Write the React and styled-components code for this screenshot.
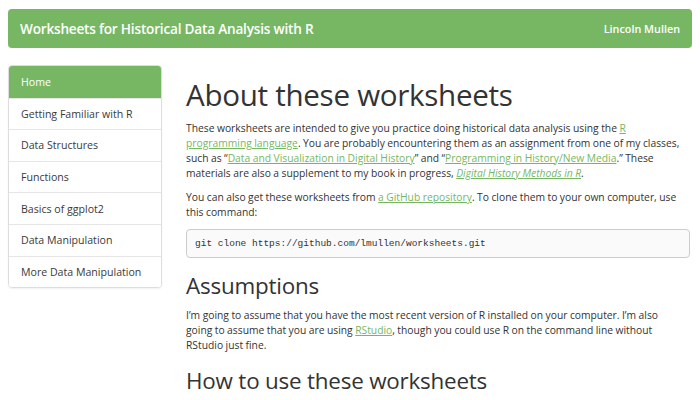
import styled, { createGlobalStyle } from 'styled-components'

const GlobalStyle = createGlobalStyle`
  html, body {
    margin: 0;
    padding: 0;
    background: #fff;
  }
  body {
    font-family: "Open Sans", "Noto Sans", sans-serif;
    color: #333;
    overflow: hidden;
  }
`

const Page = styled.div`
  width: 700px;
  height: 400px;
  padding: 9px 8px 0 8px;
  box-sizing: border-box;
  overflow: hidden;
`

const Navbar = styled.header`
  height: 39px;
  background: #77b764;
  border-radius: 4px;
  display: flex;
  align-items: center;
  justify-content: space-between;
  padding: 0 12px 0 12px;
  color: #fff;
`

const Brand = styled.div`
  font-size: 13.6px;
  font-weight: 600;
  letter-spacing: -0.2px;
`

const Author = styled.div`
  font-size: 10.8px;
  font-weight: 600;
`

const Body = styled.div`
  display: flex;
  gap: 24px;
  margin-top: 17px;
`

const Sidebar = styled.nav`
  width: 152px;
  flex-shrink: 0;
  align-self: flex-start;
  border: 1px solid #ddd;
  border-radius: 4px;
  overflow: hidden;
  box-shadow: 0 1px 2px rgba(0, 0, 0, 0.06);
`

const NavItem = styled.div`
  height: 31.6px;
  box-sizing: border-box;
  display: flex;
  align-items: center;
  padding-left: 12px;
  font-size: 10.6px;
  color: ${p => (p.active ? '#fff' : '#3a3a3a')};
  background: ${p => (p.active ? '#77b764' : '#fff')};
  border-top: ${p => (p.first ? 'none' : '1px solid #e6e6e6')};
`

const Content = styled.main`
  flex: 1;
  min-width: 0;
  padding-right: 2px;
`

const H1 = styled.h1`
  font-size: 29.6px;
  font-weight: 400;
  margin: 14px 0 9px 0;
  line-height: 1.1;
  letter-spacing: -0.3px;
  color: #333;
`

const H2 = styled.h2`
  font-size: 22.4px;
  font-weight: 400;
  margin: 16px 0 10px 0;
  line-height: 1.1;
  letter-spacing: -0.2px;
  color: #333;
`

const P = styled.p`
  font-size: 10.3px;
  line-height: 15px;
  word-spacing: -0.2px;
  margin: 0 0 9px 0;
  color: #333;
  max-width: ${p => (p.narrow ? '494px' : 'none')};
`

const Link = styled.a`
  color: #77b764;
  text-decoration: underline;
  font-style: ${p => (p.italic ? 'italic' : 'normal')};
`

const Pre = styled.pre`
  font-family: "Liberation Mono", "DejaVu Sans Mono", monospace;
  font-size: 9.5px;
  line-height: 13px;
  margin: 0 0 9px 0;
  padding: 7px 8px;
  border: 1px solid #ccc;
  border-radius: 4px;
  background: #fafafa;
  color: #333;
`

const items = [
  'Home',
  'Getting Familiar with R',
  'Data Structures',
  'Functions',
  'Basics of ggplot2',
  'Data Manipulation',
  'More Data Manipulation',
]

export default function App() {
  return (
    <Page>
      <GlobalStyle />
      <Navbar>
        <Brand>Worksheets for Historical Data Analysis with R</Brand>
        <Author>Lincoln Mullen</Author>
      </Navbar>
      <Body>
        <Sidebar>
          {items.map((item, i) => (
            <NavItem key={item} active={i === 0} first={i === 0}>
              {item}
            </NavItem>
          ))}
        </Sidebar>
        <Content>
          <H1>About these worksheets</H1>
          <P>
            These worksheets are intended to give you practice doing historical data analysis using the{' '}
            <Link href="#">R programming language</Link>. You are probably encountering them as an
            assignment from one of my classes, such as “<Link href="#">Data and Visualization in Digital History</Link>”
            and “<Link href="#">Programming in History/New Media</Link>.” These materials are also a supplement to my
            book in progress, <Link href="#" italic>Digital History Methods in R</Link>.
          </P>
          <P>
            You can also get these worksheets from <Link href="#">a GitHub repository</Link>. To clone them to your
            own computer, use this command:
          </P>
          <Pre>git clone https://github.com/lmullen/worksheets.git</Pre>
          <H2>Assumptions</H2>
          <P narrow>
            I’m going to assume that you have the most recent version of R installed on your computer. I’m also
            going to assume that you are using <Link href="#">RStudio</Link>, though you could use R on the command
            line without RStudio just fine.
          </P>
          <H2>How to use these worksheets</H2>
        </Content>
      </Body>
    </Page>
  )
}
